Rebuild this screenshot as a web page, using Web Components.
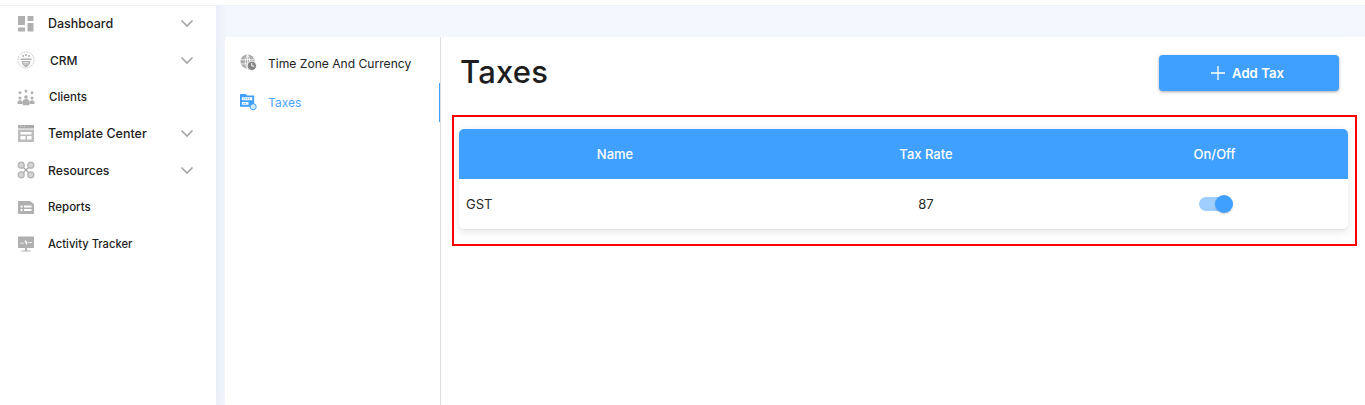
<!DOCTYPE html>
<html>
<head>
<meta charset="utf-8">
<title>Taxes</title>
<style>
    html, body { margin: 0; padding: 0; height: 100%; }
    body { font-family: "Inter", "Liberation Sans", sans-serif; color: #1f1f1f; background: #fff; overflow: hidden; }
</style>
</head>
<body>
<app-shell>
    <side-nav slot="nav">
        <nav-item label="Dashboard" icon="dashboard" caret></nav-item>
        <nav-item label="CRM" icon="crm" caret indent="2" size="12"></nav-item>
        <nav-item label="Clients" icon="clients" indent="1" size="11.5"></nav-item>
        <nav-item label="Template Center" icon="template" caret></nav-item>
        <nav-item label="Resources" icon="resources" caret size="12.2"></nav-item>
        <nav-item label="Reports" icon="reports" size="11.5"></nav-item>
        <nav-item label="Activity Tracker" icon="activity" size="11.2"></nav-item>
    </side-nav>
    <settings-nav slot="sub">
        <settings-link label="Time Zone And Currency" icon="globe"></settings-link>
        <settings-link label="Taxes" icon="folder" active></settings-link>
    </settings-nav>
    <taxes-page slot="main"></taxes-page>
</app-shell>

<script>
const ICONS = {
    dashboard: `<rect x="1" y="1" width="7" height="9"/><rect x="10.5" y="1" width="6" height="5"/><rect x="1" y="12.5" width="7" height="4"/><rect x="10.5" y="8" width="6" height="8.5"/>`,
    crm: `<circle cx="9" cy="9" r="8" fill="none" stroke="#c4c4c4" stroke-width="1" stroke-dasharray="1.500 1"/><path d="M3.500 7.500h11v1.500h-11zM4.500 10h9l-1.200 4-3.300 2.500L5.700 14z"/><path d="M6 11.500h6M6.500 13h5" stroke="#fff" stroke-width=".6"/><circle cx="6" cy="5" r="1.100"/><circle cx="9" cy="4" r="1.100"/><circle cx="12" cy="5" r="1.100"/>`,
    clients: `<path d="M3 2.500l.6 1.300 1.400.2-1 1 .2 1.400L3 5.700l-1.200.7.2-1.400-1-1 1.400-.2zM9 1l.6 1.300 1.400.2-1 1 .2 1.400L9 4.200l-1.200.7.2-1.400-1-1 1.400-.2zM15 2.500l.6 1.300 1.400.2-1 1 .2 1.400-1.200-.7-1.200.7.2-1.400-1-1 1.400-.2z"/><circle cx="3" cy="10" r="1.500"/><circle cx="9" cy="9" r="1.800"/><circle cx="15" cy="10" r="1.500"/><path d="M.5 16v-2.300q0-1.500 2.500-1.500t2.500 1.500V16zM5.700 17.200v-3.700q0-2.500 3.300-2.500t3.300 2.500v3.700zM12.500 16v-2.300q0-1.500 2.500-1.500t2.500 1.500V16z"/>`,
    template: `<path d="M1 0h16v3.500H1z" fill="#ababab"/><path d="M3 1.300h1M5 1.300h1M7 1.300h1" stroke="#e4e4e4" stroke-width=".8"/><path fill-rule="evenodd" d="M1 4.500h16V17H1zM3.500 7v2.500h11V7zM3.500 11v3.500h5V11zM10 11v3.500h4.500V11z" fill="#bdbdbd"/>`,
    resources: `<path d="M6 6l6 6M12 6l-6 6" stroke="#a9a9a9" stroke-width="1.300" fill="none"/><g fill="#d4d4d4" stroke="#b4b4b4" stroke-width="1.300"><circle cx="4.200" cy="4.200" r="3"/><circle cx="13.800" cy="4.200" r="3"/><circle cx="4.200" cy="13.800" r="3"/><circle cx="13.800" cy="13.800" r="3"/></g>`,
    reports: `<path fill-rule="evenodd" d="M1 3h12l4 3v10H1zM3.500 7.500v2h2v-2zM7 7.500v2h7.500v-2zM3.500 11v2h2v-2zM7 11v2h7.500v-2z"/>`,
    activity: `<path fill-rule="evenodd" d="M1 1.500h16V13H1zM3 7.800v.8h3.500l1.200-2.200 1.800 3.600 1.300-2.200H15v-.8h-3.700l-.8 1.300-1.800-3.600-1.500 3.100z"/><path d="M8 13h2v2.500h3.500v1h-9v-1H8z"/>`,
    globe: `<circle cx="8" cy="8" r="7.500" fill="#ababab"/><path d="M1 6h14M1 10.500h14M8 .5v15M8 .5Q3.500 8 8 15.500M8 .5Q12.500 8 8 15.500" stroke="#fff" stroke-width=".8" fill="none"/><circle cx="12.500" cy="12.500" r="5" fill="#858585" stroke="#fff"/><path d="M12.500 9.500v3.300h2.500" stroke="#fff" fill="none"/>`,
    folder: `<path d="M0 0h6l1.500 1.500H15v12H0z" fill="#3fa0ff"/><path d="M2 3.500h11v3H2zM2 8.500h7v3H2z" fill="#fff"/><path d="M3.500 5h8M3.500 10h4" stroke="#3fa0ff" stroke-width="1" stroke-dasharray="1 1"/><circle cx="14" cy="13.500" r="3.200" fill="#cfe6ff" stroke="#3fa0ff"/>`
};

class AppShell extends HTMLElement {
    constructor() {
        super();
        this.attachShadow({ mode: 'open' }).innerHTML = `
            <style>
                :host { display: block; height: 405px; }
                .top { height: 5px; background: #fff; border-bottom: 1px solid #eef1f5; }
                .body { display: flex; height: 399px; }
                .side { width: 216px; flex: none; background: #fff; }
                .work { flex: 1; min-width: 0; display: flex; flex-direction: column; background: linear-gradient(90deg, #e9eff9 0, #f4f8fe 12px); }
                .strip { height: 31px; flex: none; }
                .panels { flex: 1; display: flex; margin-left: 9px; background: #fff; min-height: 0; box-shadow: -6px 0 8px -4px #eef3fb; }
                .sub { width: 215px; flex: none; }
                .main { flex: 1; min-width: 0; border-left: 1px solid #dedede; }
            </style>
            <div class="top"></div>
            <div class="body">
                <div class="side"><slot name="nav"></slot></div>
                <div class="work">
                    <div class="strip"></div>
                    <div class="panels">
                        <div class="sub"><slot name="sub"></slot></div>
                        <div class="main"><slot name="main"></slot></div>
                    </div>
                </div>
            </div>`;
    }
}

class SideNav extends HTMLElement {
    constructor() {
        super();
        this.attachShadow({ mode: 'open' }).innerHTML = `
            <style>
                :host { display: grid; grid-auto-rows: 36.67px; margin-top: -.7px; }
            </style>
            <slot></slot>`;
    }
}

class NavItem extends HTMLElement {
    connectedCallback() {
        const icon = ICONS[this.getAttribute('icon')];
        const caret = this.hasAttribute('caret');
        const indent = this.getAttribute('indent') || 0;
        const size = this.getAttribute('size') || 12.5;
        this.attachShadow({ mode: 'open' }).innerHTML = `
            <style>
                :host { display: flex; align-items: center; padding-left: 17px; padding-right: 22px; }
                svg.i { width: 18px; height: 18px; fill: #b0b0b0; flex: none; }
                .t { margin-left: calc(13px + ${indent}px); flex: 1; font-size: ${size}px; font-weight: 500; color: #1d1d1d; white-space: nowrap; }
                svg.c { width: 14px; height: 9px; flex: none; }
            </style>
            <svg class="i" viewBox="0 0 18 18">${icon}</svg>
            <span class="t">${this.getAttribute('label')}</span>
            ${caret ? `<svg class="c" viewBox="0 0 14 9"><path d="M1.500 1.500L7 7l5.500-5.500" fill="none" stroke="#a6a6a6" stroke-width="1.700"/></svg>` : ''}`;
    }
}

class SettingsNav extends HTMLElement {
    constructor() {
        super();
        this.attachShadow({ mode: 'open' }).innerHTML = `
            <style>
                :host { display: grid; grid-auto-rows: 39.500px; padding-top: 6px; }
            </style>
            <slot></slot>`;
    }
}

class SettingsLink extends HTMLElement {
    connectedCallback() {
        const active = this.hasAttribute('active');
        this.attachShadow({ mode: 'open' }).innerHTML = `
            <style>
                :host { display: flex; align-items: center; padding-left: 15px; font-size: 12.100px; color: ${active ? '#4fa5ff' : '#232323'}; border-right: 2px solid ${active ? '#3fa0ff' : 'transparent'}; margin-right: -1px; }
                svg { width: 17px; height: 17px; flex: none; }
                span { margin-left: 11px; white-space: nowrap; padding-top: 1px; }
            </style>
            <svg viewBox="0 0 18 18">${ICONS[this.getAttribute('icon')]}</svg>
            <span>${this.getAttribute('label')}</span>`;
    }
}

class AddButton extends HTMLElement {
    constructor() {
        super();
        this.attachShadow({ mode: 'open' }).innerHTML = `
            <style>
                :host { display: flex; align-items: center; justify-content: center; gap: 7px; width: 180px; height: 36px; background: #3fa0ff; color: #fff; border-radius: 4px; box-shadow: 0 1px 3px rgba(0,0,0,.35); font-size: 13.200px; font-weight: 600; line-height: 34px; padding-right: 3px; box-sizing: border-box; }
                svg { width: 14px; height: 14px; }
            </style>
            <svg viewBox="0 0 14 14"><path d="M7 0v14M0 7h14" stroke="#fff" stroke-width="1.300"/></svg>
            <slot></slot>`;
    }
}

class ToggleSwitch extends HTMLElement {
    constructor() {
        super();
        this.attachShadow({ mode: 'open' }).innerHTML = `
            <style>
                :host { display: flex; align-items: center; justify-content: flex-end; width: 34px; height: 18px; position: relative; }
                .track { position: absolute; left: 0; right: 2px; top: 2px; height: 14px; border-radius: 7px; background: #9fcfff; }
                .knob { position: relative; width: 18px; height: 18px; border-radius: 50%; background: #3fa0ff; box-shadow: 0 1px 2px rgba(0,0,0,.2); }
            </style>
            <div class="track"></div>
            <div class="knob"></div>`;
    }
}

class TaxTable extends HTMLElement {
    constructor() {
        super();
        this.attachShadow({ mode: 'open' }).innerHTML = `
            <style>
                :host { display: block; border-radius: 5px; background: #fff; box-shadow: 0 2px 8px rgba(0,0,0,.1); border-bottom: 1px solid #e2e2e2; overflow: hidden; }
                .row { display: grid; grid-template-columns: 312px 310px 267px; align-items: center; }
                .head { height: 50px; background: #3fa0ff; color: #fff; font-size: 13px; font-weight: 500; text-align: center; }
                .line { height: 50px; font-size: 13px; color: #2a2a2a; text-align: center; }
                .line .name { text-align: left; padding-left: 7px; }
                .sw { display: flex; justify-content: center; padding-left: 3px; }
            </style>
            <div class="row head"><div>Name</div><div>Tax Rate</div><div>On/Off</div></div>
            <div class="row line">
                <div class="name">GST</div>
                <div>87</div>
                <div class="sw"><toggle-switch></toggle-switch></div>
            </div>`;
    }
}

class TaxesPage extends HTMLElement {
    constructor() {
        super();
        this.attachShadow({ mode: 'open' }).innerHTML = `
            <style>
                :host { display: block; padding: 18px 8px 0 11px; }
                header { display: flex; justify-content: space-between; align-items: center; height: 36px; padding: 0 18px 0 8px; }
                h1 { margin: 0 0 4px 0; font-size: 31px; font-weight: 500; color: #1d1d1d; letter-spacing: .2px; }
                .mark { margin-top: 24px; border: 2px solid #f00; padding: 12px 7px 14px 5px; }
            </style>
            <header><h1>Taxes</h1><add-button>Add Tax</add-button></header>
            <div class="mark"><tax-table></tax-table></div>`;
    }
}

customElements.define('app-shell', AppShell);
customElements.define('side-nav', SideNav);
customElements.define('nav-item', NavItem);
customElements.define('settings-nav', SettingsNav);
customElements.define('settings-link', SettingsLink);
customElements.define('add-button', AddButton);
customElements.define('toggle-switch', ToggleSwitch);
customElements.define('tax-table', TaxTable);
customElements.define('taxes-page', TaxesPage);
</script>
</body>
</html>
